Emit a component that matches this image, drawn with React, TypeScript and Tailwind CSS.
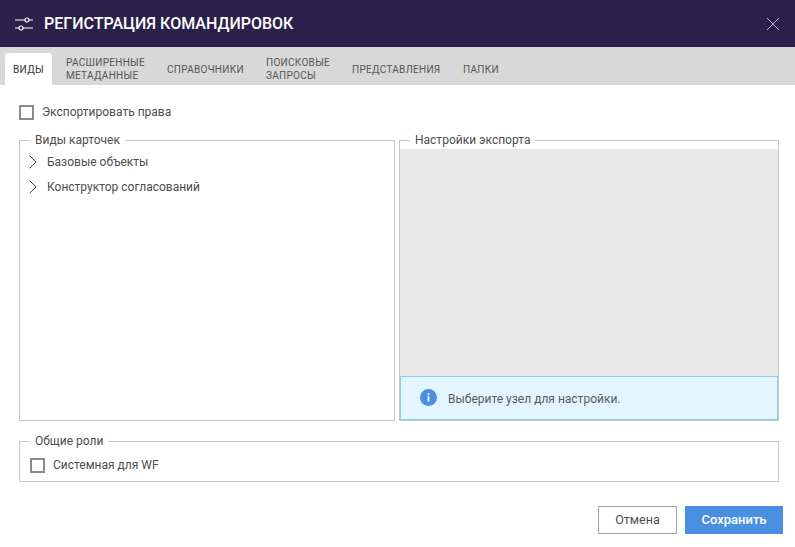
import { ChevronRight } from "lucide-react";
import type { ReactNode } from "react";

const TABS = [
  { label: "Виды", width: "w-[47px]", active: true },
  { label: "Расширенные метаданные", width: "w-[101px]" },
  { label: "Справочники", width: "w-[99px]" },
  { label: "Поисковые запросы", width: "w-[86px]" },
  { label: "Представления", width: "w-[111px]" },
  { label: "Папки", width: "w-[58px]" },
];

function Checkbox({ label }: { label: string }) {
  return (
    <label className="flex items-center gap-[8px] text-[12px] leading-[18px] text-[#4d4d4d]">
      <span className="w-[15px] h-[15px] border-2 border-[#8a8a8a] bg-white shrink-0" />
      {label}
    </label>
  );
}

function Group({ title, className, children }: { title: string; className: string; children: ReactNode }) {
  return (
    <fieldset className={`border border-[#c8c8c8] min-w-0 ${className}`}>
      <legend className="ml-[10px] px-[5px] text-[12px] leading-[18px] text-[#4d4d4d]">{title}</legend>
      {children}
    </fieldset>
  );
}

function TreeRow({ label }: { label: string }) {
  return (
    <div className="h-[25px] flex items-center pl-[1px] gap-[2px] text-[12px] text-[#4d4d4d]">
      <ChevronRight size={24} strokeWidth={1} className="text-[#444]" />
      {label}
    </div>
  );
}

function SettingsIcon() {
  return (
    <svg width="18" height="14" viewBox="0 0 18 14" fill="none" stroke="currentColor" strokeWidth="1.2">
      <path d="M0 3h10M14 3h4M0 11h4M8 11h10" />
      <circle cx="12" cy="3" r="2" />
      <circle cx="6" cy="11" r="2" />
    </svg>
  );
}

function CloseIcon() {
  return (
    <svg width="12" height="12" viewBox="0 0 12 12" fill="none" stroke="#d0cdd8" strokeWidth="0.9">
      <path d="M0 0l12 12M12 0L0 12" />
    </svg>
  );
}

function InfoIcon() {
  return (
    <svg width="17" height="17" viewBox="0 0 17 17" className="shrink-0 mb-[2px]">
      <circle cx="8.5" cy="8.5" r="8.5" fill="#4a90e2" />
      <rect x="7.6" y="7.2" width="1.8" height="5.3" fill="#fff" />
      <rect x="7.6" y="4.3" width="1.8" height="1.8" fill="#fff" />
    </svg>
  );
}

export default function App() {
  return (
    <div className="w-[795px] h-[547px] flex flex-col bg-white font-['Roboto',sans-serif] overflow-hidden">
      <header className="h-[47px] shrink-0 flex items-center bg-[#2a2049] pl-[15px] pr-[16px] text-white">
        <SettingsIcon />
        <h1 className="ml-[11px] text-[16px] font-medium">РЕГИСТРАЦИЯ КОМАНДИРОВОК</h1>
        <span className="ml-auto">
          <CloseIcon />
        </span>
      </header>

      <nav className="h-[38px] shrink-0 flex items-end bg-[#d8d8d8] pl-[5px]">
        {TABS.map((tab) => (
          <div
            key={tab.label}
            className={`${tab.width} h-[32px] flex items-center uppercase text-[10px] leading-[13px] tracking-[0.3px] ${
              tab.active ? "justify-center bg-white rounded-t-[4px] text-[#333]" : "pl-[14px] text-[#555]"
            }`}
          >
            <span className="block">{tab.label}</span>
          </div>
        ))}
      </nav>

      <main className="flex-1 flex flex-col pl-[19px] pr-[16px]">
        <div className="mt-[18px] h-[18px]">
          <Checkbox label="Экспортировать права" />
        </div>

        <div className="mt-[10px] flex gap-[4px]">
          <Group title="Виды карточек" className="w-[376px] h-[290px]">
            <TreeRow label="Базовые объекты" />
            <TreeRow label="Конструктор согласований" />
          </Group>
          <Group title="Настройки экспорта" className="w-[380px] h-[290px] flex flex-col">
            <div className="h-[227px] bg-[#e8e8e8]" />
            <div className="h-[44px] flex items-center gap-[11px] pl-[19px] bg-[#e3f5fe] border border-[#83d0f9] text-[12px] text-[#5a5a5a]">
              <InfoIcon />
              <span className="pt-[2px]">Выберите узел для настройки.</span>
            </div>
          </Group>
        </div>

        <Group title="Общие роли" className="mt-[11px] w-[760px] h-[50px]">
          <div className="pl-[10px] pt-[6px]">
            <Checkbox label="Системная для WF" />
          </div>
        </Group>

        <div className="mt-[24px] -mr-[4px] flex justify-end gap-[8px]">
          <button className="w-[79px] h-[28px] border border-[#a8a8a8] bg-white text-[12.5px] text-[#4d4d4d]">
            Отмена
          </button>
          <button className="w-[98px] h-[28px] bg-[#4a90e2] text-[13px] font-medium text-white">
            Сохранить
          </button>
        </div>
      </main>
    </div>
  );
}
